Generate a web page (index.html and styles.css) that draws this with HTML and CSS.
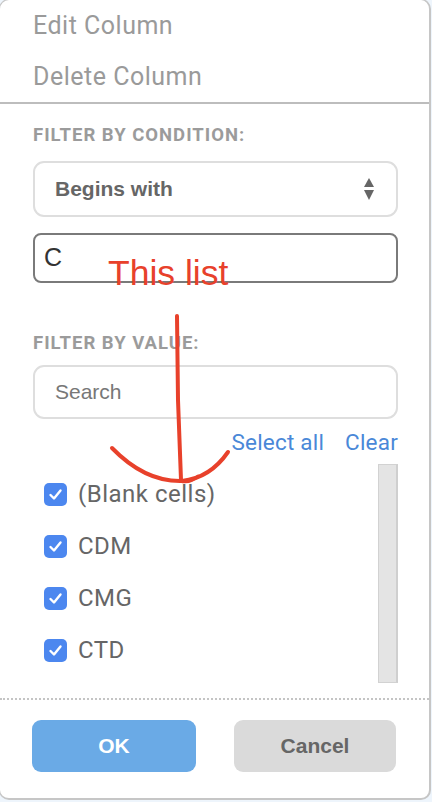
FILE: index.html
```html
<!DOCTYPE html>
<html>
<head>
<meta charset="utf-8">
<link rel="stylesheet" href="styles.css">
</head>
<body>
<div class="panel">
  <div class="menu">
    <div class="menu-item">Edit Column</div>
    <div class="menu-item">Delete Column</div>
  </div>
  <div class="section">
    <div class="label label-cond">FILTER BY CONDITION:</div>
    <div class="select">
      <span class="select-text">Begins with</span>
      <svg class="select-arrows" width="12" height="24" viewBox="0 0 12 24"><path d="M6 0 L11 9 L1 9 Z" fill="#666"/><path d="M1 12 L11 12 L6 22 Z" fill="#666"/></svg>
    </div>
    <div class="input-cond">C</div>
    <div class="label label-value">FILTER BY VALUE:</div>
    <div class="search">Search</div>
    <div class="links">
      <span class="link">Select all</span>
      <span class="link">Clear</span>
    </div>
    <div class="list-wrap">
      <div class="list">
        <div class="row"><span class="cb"><svg width="23" height="23" viewBox="0 0 23 23"><path d="M6.5 12 L10 15.5 L16.5 7.5" fill="none" stroke="#fff" stroke-width="2.4" stroke-linecap="round" stroke-linejoin="round"/></svg></span><span class="row-text">(Blank cells)</span></div>
        <div class="row"><span class="cb"><svg width="23" height="23" viewBox="0 0 23 23"><path d="M6.5 12 L10 15.5 L16.5 7.5" fill="none" stroke="#fff" stroke-width="2.4" stroke-linecap="round" stroke-linejoin="round"/></svg></span><span class="row-text">CDM</span></div>
        <div class="row"><span class="cb"><svg width="23" height="23" viewBox="0 0 23 23"><path d="M6.5 12 L10 15.5 L16.5 7.5" fill="none" stroke="#fff" stroke-width="2.4" stroke-linecap="round" stroke-linejoin="round"/></svg></span><span class="row-text">CMG</span></div>
        <div class="row"><span class="cb"><svg width="23" height="23" viewBox="0 0 23 23"><path d="M6.5 12 L10 15.5 L16.5 7.5" fill="none" stroke="#fff" stroke-width="2.4" stroke-linecap="round" stroke-linejoin="round"/></svg></span><span class="row-text">CTD</span></div>
      </div>
      <div class="track"></div>
    </div>
  </div>
  <div class="footer">
    <div class="btn btn-ok">OK</div>
    <div class="btn btn-cancel">Cancel</div>
  </div>
  <div class="annot-text">This list</div>
  <svg class="annot-arrow" width="432" height="802" viewBox="0 0 432 802">
    <path d="M177 316 L178 400 L181 480" fill="none" stroke="#e8412b" stroke-width="4" stroke-linecap="round"/>
    <path d="M112 448 Q145 482 182 481 Q210 478 228 452" fill="none" stroke="#e8412b" stroke-width="4" stroke-linecap="round"/>
    <path d="M180 481 Q190 484 198 476" fill="none" stroke="#e8412b" stroke-width="3" stroke-linecap="round"/>
  </svg>
</div>
</body>
</html>
```

FILE: styles.css
```css
* { box-sizing: border-box; }
html, body { margin: 0; padding: 0; }
body {
  background: #eef5fc;
  width: 432px;
  height: 802px;
  overflow: hidden;
  font-family: Roboto, "Liberation Sans", sans-serif;
}
.panel {
  position: relative;
  margin-left: -1px;
  margin-top: -1px;
  width: 432px;
  height: 801px;
  background: #fff;
  border: 1px solid #c6c6c6;
  border-right-width: 2px;
  border-bottom-width: 2px;
  border-radius: 10px;
  display: flex;
  flex-direction: column;
}
.menu {
  border-bottom: 2px solid #bdbdbd;
}
.menu-item {
  height: 51px;
  line-height: 51px;
  padding-left: 33px;
  font-size: 25px;
  letter-spacing: 0.5px;
  color: #9a9a9a;
}
.section {
  padding: 0 31px 0 33px;
  display: flex;
  flex-direction: column;
}
.label {
  font-weight: 700;
  font-size: 18.5px;
  letter-spacing: 1px;
  color: #9b9b9b;
  line-height: 20px;
  height: 20px;
}
.label-cond { margin-top: 21px; }
.label-value { margin-top: 50px; }
.select {
  margin-top: 16px;
  height: 56px;
  border: 2px solid #dedede;
  border-radius: 11px;
  display: flex;
  align-items: center;
  justify-content: space-between;
  padding: 0 21px 0 20px;
}
.select-text {
  font-family: "Liberation Sans", Arial, sans-serif;
  font-weight: 700;
  font-size: 21px;
  color: #666;
}
.select-arrows { display: block; margin-top: 2px; }
.input-cond {
  margin-top: 16px;
  height: 50px;
  border: 2px solid #7a7a7a;
  border-radius: 8px;
  padding-left: 9px;
  font-family: "Liberation Sans", Arial, sans-serif;
  font-size: 25px;
  line-height: 44px;
  color: #333;
}
.search {
  margin-top: 12px;
  height: 54px;
  border: 2px solid #dedede;
  border-radius: 11px;
  padding-left: 20px;
  font-family: "Liberation Sans", Arial, sans-serif;
  font-size: 21px;
  line-height: 50px;
  color: #777;
}
.links {
  margin-top: 11px;
  height: 24px;
  display: flex;
  justify-content: flex-end;
  gap: 21px;
}
.link {
  font-size: 22.5px;
  line-height: 24px;
  color: #4a88d8;
  letter-spacing: 0.2px;
}
.list-wrap {
  margin-top: 10px;
  height: 219px;
  display: flex;
  justify-content: space-between;
}
.list {
  padding-top: 4px;
  padding-left: 11px;
}
.row {
  height: 52px;
  display: flex;
  align-items: center;
  gap: 11px;
}
.cb {
  width: 23px;
  height: 23px;
  border-radius: 5px;
  background: #4c87ef;
  display: block;
}
.cb svg { display: block; }
.row-text {
  font-size: 24px;
  letter-spacing: 0.5px;
  color: #666;
}
.track {
  width: 20px;
  height: 219px;
  background: #e4e4e4;
  border: 1px solid #d2d2d2;
  border-right: 2px solid #cfcfcf;
}
.footer {
  margin-top: 15px;
  border-top: 2px dotted #c4c4c4;
  padding: 20px 33px 0 32px;
  display: flex;
  justify-content: space-between;
}
.btn {
  height: 52px;
  border-radius: 9px;
  display: flex;
  align-items: center;
  justify-content: center;
  font-family: "Liberation Sans", Arial, sans-serif;
  font-weight: 700;
  font-size: 21px;
}
.btn-ok {
  width: 164px;
  background: #6aaae6;
  color: #fff;
}
.btn-cancel {
  width: 162px;
  background: #dadada;
  color: #666;
}
.annot-text {
  position: absolute;
  left: 108px;
  top: 253px;
  font-family: "Liberation Sans", Arial, sans-serif;
  font-size: 35.5px;
  line-height: 40px;
  color: #e8412b;
}
.annot-arrow {
  position: absolute;
  left: 0;
  top: 0;
  pointer-events: none;
}
```
